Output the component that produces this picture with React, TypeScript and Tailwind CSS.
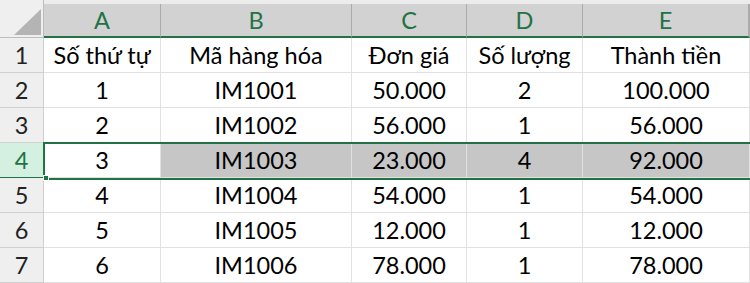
import React from 'react';

const columns = ['A', 'B', 'C', 'D', 'E'];

const rows: string[][] = [
  ['Số thứ tự', 'Mã hàng hóa', 'Đơn giá', 'Số lượng', 'Thành tiền'],
  ['1', 'IM1001', '50.000', '2', '100.000'],
  ['2', 'IM1002', '56.000', '1', '56.000'],
  ['3', 'IM1003', '23.000', '4', '92.000'],
  ['4', 'IM1004', '54.000', '1', '54.000'],
  ['5', 'IM1005', '12.000', '1', '12.000'],
  ['6', 'IM1006', '78.000', '1', '78.000'],
];

const SELECTED_ROW = 3; // row "4" in the sheet

const App = () => {
  return (
    <div
      className="relative w-[750px] h-[283px] overflow-hidden bg-white text-[23.5px] leading-none text-black"
      style={{ fontFamily: 'Lato, "Noto Sans", sans-serif' }}
    >
      <div className="grid grid-cols-[44px_117px_191px_115px_116px_167px] grid-rows-[38px_repeat(7,35px)]">
        {/* Corner */}
        <div className="relative bg-[#efefef] border-r border-b border-[#bdbdbd]">
          <div className="absolute left-[14px] top-[9px] w-0 h-0 border-l-[27px] border-l-transparent border-b-[26px] border-b-[#b4b4b4]" />
        </div>

        {/* Column headers */}
        {columns.map((c, i) => (
          <div key={c} className="flex flex-col bg-[#ececec]">
            <div
              className={`flex-1 mt-[4px] flex items-center justify-center pt-[2px] bg-[#d2d2d2] text-[#217346] border-b-2 border-[#217346] ${
                i < columns.length - 1 ? 'border-r border-r-[#ababab]' : 'border-r-2 border-r-[#ababab]'
              }`}
            >
              {c}
            </div>
          </div>
        ))}

        {/* Body */}
        {rows.map((r, ri) => {
          const selected = ri === SELECTED_ROW;
          return (
            <React.Fragment key={ri}>
              <div
                className={`flex items-center justify-center pt-[2px] border-r border-b ${
                  selected
                    ? 'bg-[#d3f0e0] text-[#217346] border-[#217346]'
                    : 'bg-[#efefef] text-[#222] border-[#d0d0d0]'
                }`}
              >
                {ri + 1}
              </div>
              {r.map((v, ci) => (
                <div
                  key={ci}
                  className={`flex items-center justify-center pt-[2px] border-r border-b border-[#e1e1e1] ${
                    selected && ci > 0 ? 'bg-[#c6c6c6]' : 'bg-white'
                  }`}
                >
                  {v}
                </div>
              ))}
            </React.Fragment>
          );
        })}
      </div>

      {/* Selection border over A4:E4 */}
      <div className="absolute left-[43px] top-[142px] w-[710px] h-[38px] border-2 border-[#217346] pointer-events-none" />
      <div className="absolute left-[43px] top-[175px] w-[6px] h-[6px] bg-[#217346] border border-white" />
    </div>
  );
};

export default App;
